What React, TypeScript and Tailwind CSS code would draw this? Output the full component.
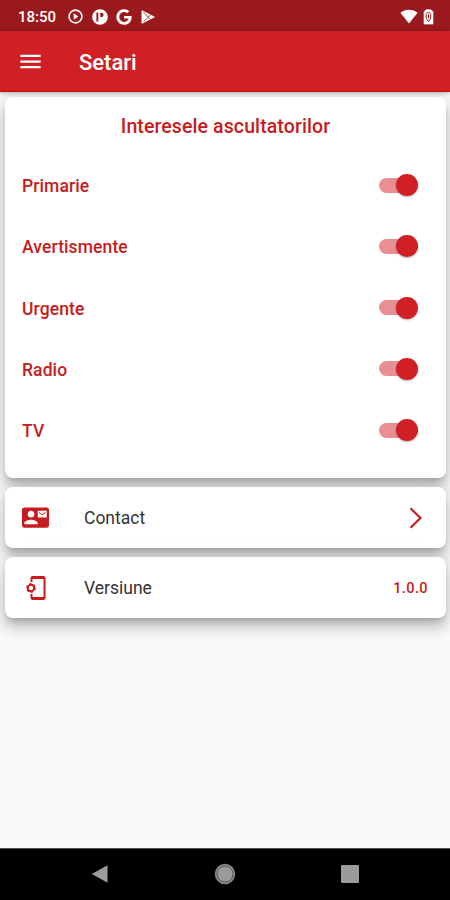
import { useState } from "react";
import { FaGoogle } from "react-icons/fa";
import { MdContactMail, MdMenu } from "react-icons/md";

const interests = ["Primarie", "Avertismente", "Urgente", "Radio", "TV"];

// ── Status Bar ──
function StatusBar() {
  return (
    <div className="h-[31px] shrink-0 bg-[#99191c] flex items-center justify-between pl-[18px] pr-[16px] pt-[2px] text-white">
      <div className="flex items-center">
        <span className="w-[38px] pt-px text-[15px] leading-none font-medium tracking-[0px] whitespace-nowrap">
          18:50
        </span>
        <svg className="ml-[12px]" width="15" height="15" viewBox="0 0 15 15" fill="none">
          <circle cx="7.5" cy="7.5" r="6.4" stroke="currentColor" strokeWidth="1.6" />
          <path d="M5.7 4.2v6.6l4.6-3.3z" fill="currentColor" />
        </svg>
        <svg className="ml-[9px]" width="16" height="16" viewBox="0 0 16 16">
          <circle cx="8" cy="8" r="7.8" fill="currentColor" />
          <path d="M4.4 3.6h1.9v8.8H4.4zM8.3 3.800h1.200a2.100 2.100 0 0 1 0 4.200H8.300z" fill="#99191c" />
        </svg>
        <FaGoogle className="ml-[8px]" size={16} />
        <svg className="ml-[9px]" width="15" height="14" viewBox="0 0 15 14" fill="none">
          <path d="M1 .8v12.4L13.3 7z" fill="currentColor" stroke="currentColor" strokeWidth="1" strokeLinejoin="round" />
          <path d="M2.5 2.2 9.6 9.4M2.5 11.8l7.1-7.2" stroke="#99191c" strokeWidth="0.8" />
        </svg>
      </div>

      <div className="flex items-center gap-[5px]">
        <svg width="18" height="15" viewBox="0 0 18 15">
          <path d="M.4 3.8C5.5-.2 12.5-.2 17.6 3.8L9 14.5z" fill="currentColor" />
        </svg>
        <svg width="11" height="16" viewBox="0 0 11 16">
          <path d="M3 .7h5l2 2v12.400H1V2.700z" fill="currentColor" stroke="currentColor" strokeWidth=".6" strokeLinejoin="round" />
          <path d="M3.300 9.500V5.500c0-2.600 4.400-2.600 4.400 0v4L5.500 12.700z" fill="none" stroke="#99191c" strokeWidth="1" />
          <path d="M5.500 5.500v4" stroke="#99191c" strokeWidth="1" />
        </svg>
      </div>
    </div>
  );
}

// ── App Bar ──
function AppBar() {
  return (
    <header className="relative z-10 h-[61px] shrink-0 bg-[#d02026] border-b border-[#c40a0a] flex items-center pl-[17px] text-white shadow-[0_1px_5px_rgba(0,0,0,0.3)]">
      <button aria-label="Meniu">
        <MdMenu size={27} />
      </button>
      <h1 className="ml-[35px] pt-[3px] text-[22px] leading-none font-medium tracking-[0px]">Setari</h1>
    </header>
  );
}

function Toggle({ label }: { label: string }) {
  const [on, setOn] = useState(true);

  return (
    <button
      role="switch"
      aria-checked={on}
      aria-label={label}
      onClick={() => setOn(!on)}
      className={`w-[40px] h-[22px] flex items-center ${on ? "justify-end" : "flex-row-reverse justify-end"}`}
    >
      <span className={`h-[15px] w-[34px] shrink-0 rounded-full ${on ? "-mr-[17px] bg-[#e78f92]" : "-ml-[17px] bg-gray-400"}`} />
      <span
        className={`relative size-[22px] shrink-0 rounded-full shadow-[0_1px_2px_rgba(0,0,0,0.3)] ${on ? "bg-[#d02026]" : "bg-gray-50"}`}
      />
    </button>
  );
}

function Card({ className, children }: { className: string; children: React.ReactNode }) {
  return (
    <section
      className={`rounded-[8px] bg-white shadow-[0_6px_7px_-3px_rgba(0,0,0,0.2),0_10px_15px_1px_rgba(0,0,0,0.14),0_4px_18px_3px_rgba(0,0,0,0.1)] ${className}`}
    >
      {children}
    </section>
  );
}

// Phone outline with a small gear on its left edge
function PhoneSetupIcon() {
  return (
    <svg width="22" height="26" viewBox="0 0 22 26" fill="none" stroke="#c61c20">
      <path d="M6.500 7V3.200c0-.7.4-1.200 1.200-1.200h10.600c.8 0 1.200.5 1.200 1.200v19.600c0 .7-.4 1.200-1.200 1.200H7.700c-.8 0-1.200-.5-1.200-1.200V19" strokeWidth="2" />
      <path d="M7 2.700h12M7 23.300h12" strokeWidth="2.600" />
      <circle cx="6" cy="13" r="3.200" strokeWidth="2" />
      <circle cx="6" cy="13" r="4.300" strokeWidth="1.200" strokeDasharray="2.200 2.300" />
    </svg>
  );
}

// ── Navigation Bar ──
function NavBar() {
  return (
    <nav className="h-[52px] shrink-0 bg-black border-t border-[#555] flex items-center justify-between pl-[91px] pr-[91px] pb-px text-[#9b9b9b]">
      <svg width="18" height="20" viewBox="0 0 18 20">
        <path d="M.8 10 16.500 1.200v17.600z" fill="currentColor" />
      </svg>
      <svg width="22" height="22" viewBox="0 0 22 22">
        <circle cx="11" cy="11" r="9.500" fill="#9b9b9b" stroke="#858585" strokeWidth="1.500" />
        <circle cx="11" cy="11" r="8" fill="none" stroke="#555" strokeWidth="1" />
      </svg>
      <span className="size-[18px] rounded-[1px] bg-[#9b9b9b]" />
    </nav>
  );
}

export default function App() {
  return (
    <div className="w-[450px] h-[900px] overflow-hidden flex flex-col bg-[#fafafa] font-[Roboto,sans-serif]">
      <StatusBar />
      <AppBar />

      <main className="flex-1 flex flex-col gap-[9px] pt-[5px] pl-[5px] pr-[4px]">
        <Card className="h-[381px]">
          <h2 className="pt-[19px] text-center text-[19.5px] leading-[22px] font-medium tracking-[0.1px] text-[#c61c20]">
            Interesele ascultatorilor
          </h2>
          <ul className="mt-[16.5px]">
            {interests.map((name) => (
              <li key={name} className="h-[61.25px] flex items-center justify-between pl-[17px] pr-[28px]">
                <span className="pt-[2px] text-[17.5px] font-medium tracking-[0.1px] text-[#c61c20]">{name}</span>
                <Toggle label={name} />
              </li>
            ))}
          </ul>
        </Card>

        <Card className="h-[61px] flex items-center pl-[17px] pr-[22px]">
          <MdContactMail size={27} className="text-[#c61c20]" />
          <span className="ml-[35px] flex-1 pt-[2px] text-[17.5px] tracking-[0px] text-[#333]">Contact</span>
          <svg width="16" height="22" viewBox="0 0 16 22" fill="none">
            <path d="M2.500 1.300 12.500 11 2.500 20.700" stroke="#c61c20" strokeWidth="2.200" />
          </svg>
        </Card>

        <Card className="h-[61px] flex items-center pl-[20px] pr-[18px]">
          <PhoneSetupIcon />
          <span className="ml-[37px] flex-1 pt-[2px] text-[17.5px] tracking-[0px] text-[#333]">Versiune</span>
          <span className="pt-[2px] text-[14.5px] font-medium tracking-[0.4px] text-[#c61c20]">1.0.0</span>
        </Card>
      </main>

      <NavBar />
    </div>
  );
}
